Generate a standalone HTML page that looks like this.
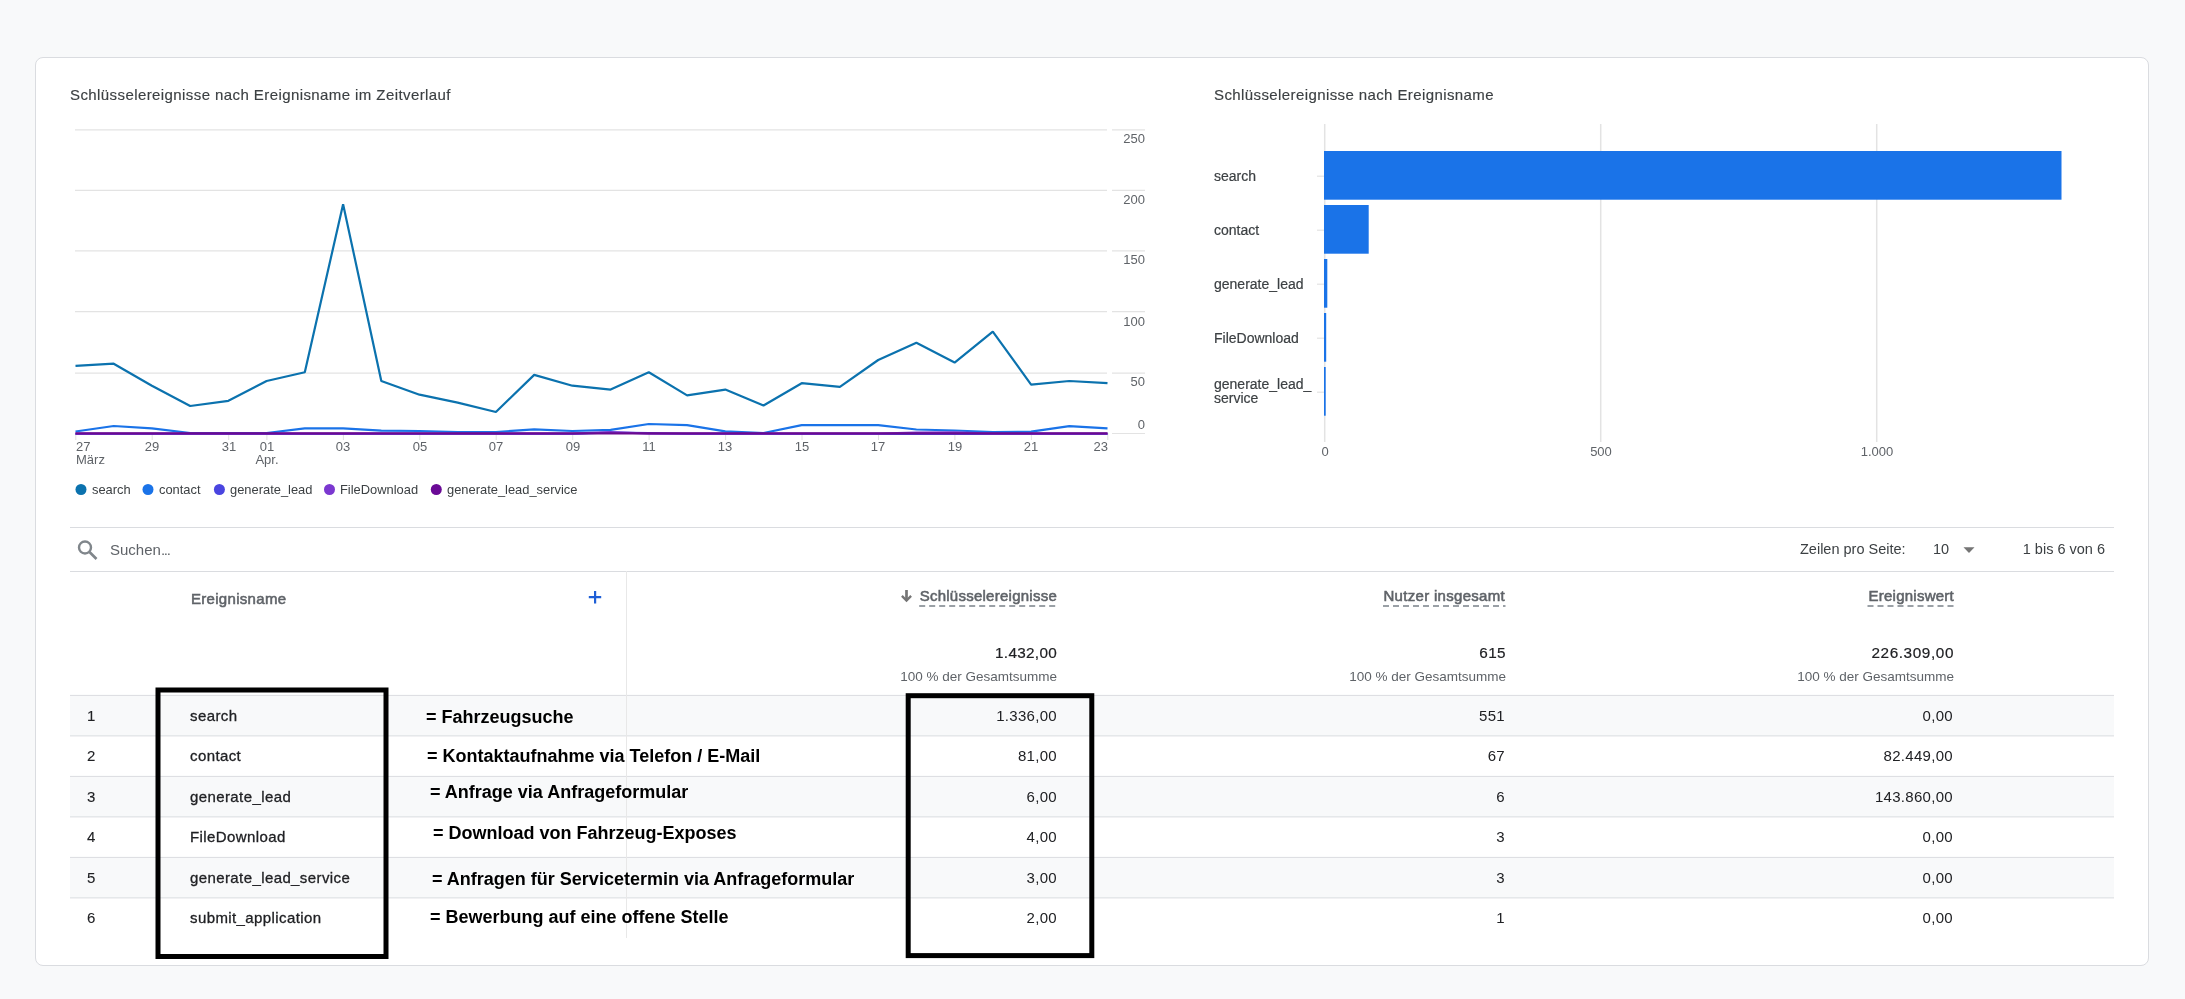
<!DOCTYPE html>
<html><head><meta charset="utf-8"><style>
html,body{margin:0;padding:0;}
body{width:2185px;height:999px;background:#f8f9fa;position:relative;overflow:hidden;font-family:"Liberation Sans", sans-serif;}
.card{position:absolute;left:35px;top:57px;width:2112px;height:907px;background:#fff;border:1px solid #dadce0;border-radius:8px;}
.t{position:absolute;white-space:nowrap;line-height:30px;height:30px;will-change:transform;}
svg{position:absolute;left:0;top:0;}
</style></head><body>
<div class="card"></div>
<svg width="2185" height="999" viewBox="0 0 2185 999">
<line x1="75" y1="129.8" x2="1107" y2="129.8" stroke="#e3e3e3" stroke-width="1.2"/>
<line x1="1112" y1="129.8" x2="1145" y2="129.8" stroke="#e3e3e3" stroke-width="1.2"/>
<line x1="75" y1="190.3" x2="1107" y2="190.3" stroke="#e3e3e3" stroke-width="1.2"/>
<line x1="1112" y1="190.3" x2="1145" y2="190.3" stroke="#e3e3e3" stroke-width="1.2"/>
<line x1="75" y1="250.9" x2="1107" y2="250.9" stroke="#e3e3e3" stroke-width="1.2"/>
<line x1="1112" y1="250.9" x2="1145" y2="250.9" stroke="#e3e3e3" stroke-width="1.2"/>
<line x1="75" y1="311.7" x2="1107" y2="311.7" stroke="#e3e3e3" stroke-width="1.2"/>
<line x1="1112" y1="311.7" x2="1145" y2="311.7" stroke="#e3e3e3" stroke-width="1.2"/>
<line x1="75" y1="373.2" x2="1107" y2="373.2" stroke="#e3e3e3" stroke-width="1.2"/>
<line x1="1112" y1="373.2" x2="1145" y2="373.2" stroke="#e3e3e3" stroke-width="1.2"/>
<line x1="75" y1="433.5" x2="1107" y2="433.5" stroke="#e3e3e3" stroke-width="1.2"/>
<line x1="1112" y1="433.5" x2="1145" y2="433.5" stroke="#e3e3e3" stroke-width="1.2"/>
<line x1="75.8" y1="433" x2="75.8" y2="440" stroke="#e0e0e0" stroke-width="1"/>
<line x1="152.2" y1="433" x2="152.2" y2="440" stroke="#e0e0e0" stroke-width="1"/>
<line x1="228.7" y1="433" x2="228.7" y2="440" stroke="#e0e0e0" stroke-width="1"/>
<line x1="266.9" y1="433" x2="266.9" y2="440" stroke="#e0e0e0" stroke-width="1"/>
<line x1="343.4" y1="433" x2="343.4" y2="440" stroke="#e0e0e0" stroke-width="1"/>
<line x1="419.8" y1="433" x2="419.8" y2="440" stroke="#e0e0e0" stroke-width="1"/>
<line x1="496.2" y1="433" x2="496.2" y2="440" stroke="#e0e0e0" stroke-width="1"/>
<line x1="572.7" y1="433" x2="572.7" y2="440" stroke="#e0e0e0" stroke-width="1"/>
<line x1="649.1" y1="433" x2="649.1" y2="440" stroke="#e0e0e0" stroke-width="1"/>
<line x1="725.6" y1="433" x2="725.6" y2="440" stroke="#e0e0e0" stroke-width="1"/>
<line x1="802.0" y1="433" x2="802.0" y2="440" stroke="#e0e0e0" stroke-width="1"/>
<line x1="878.5" y1="433" x2="878.5" y2="440" stroke="#e0e0e0" stroke-width="1"/>
<line x1="954.9" y1="433" x2="954.9" y2="440" stroke="#e0e0e0" stroke-width="1"/>
<line x1="1031.4" y1="433" x2="1031.4" y2="440" stroke="#e0e0e0" stroke-width="1"/>
<line x1="1107.8" y1="433" x2="1107.8" y2="440" stroke="#e0e0e0" stroke-width="1"/>
<polyline points="75.5,365.9 113.7,363.7 151.9,385.7 190.2,406.0 228.4,400.8 266.6,381.0 304.8,372.3 343.1,204.2 381.3,381.0 419.5,394.7 457.7,402.6 495.9,412.0 534.2,374.9 572.4,385.7 610.6,389.6 648.8,372.3 687.1,395.4 725.3,389.6 763.5,405.5 801.7,383.2 839.9,386.8 878.2,360.0 916.4,342.8 954.6,362.6 992.8,331.6 1031.1,384.6 1069.3,381.0 1107.5,383.2" fill="none" stroke="#0b72ae" stroke-width="2.2" stroke-linejoin="bevel"/>
<polyline points="75.5,431.5 113.7,426.0 151.9,428.4 190.2,433.0 228.4,433.0 266.6,433.0 304.8,428.4 343.1,428.4 381.3,430.7 419.5,431.0 457.7,432.0 495.9,432.0 534.2,429.4 572.4,431.0 610.6,429.8 648.8,424.0 687.1,425.2 725.3,431.4 763.5,433.0 801.7,425.1 839.9,425.1 878.2,425.1 916.4,429.5 954.6,430.5 992.8,432.0 1031.1,431.7 1069.3,426.2 1107.5,428.3" fill="none" stroke="#1a73e8" stroke-width="2.2" stroke-linejoin="bevel"/>
<polyline points="75.5,433.9 113.7,433.9 151.9,433.9 190.2,433.9 228.4,433.9 266.6,433.9 304.8,433.9 343.1,433.9 381.3,433.9 419.5,433.9 457.7,433.9 495.9,433.9 534.2,433.9 572.4,433.9 610.6,432.6 648.8,433.0 687.1,433.9 725.3,433.9 763.5,433.9 801.7,433.9 839.9,433.9 878.2,433.9 916.4,433.9 954.6,433.9 992.8,433.9 1031.1,433.9 1069.3,433.9 1107.5,433.9" fill="none" stroke="#4a45e0" stroke-width="2.0" stroke-linejoin="bevel"/>
<polyline points="75.5,433.6 113.7,433.6 151.9,433.6 190.2,433.6 228.4,433.6 266.6,433.6 304.8,433.6 343.1,433.6 381.3,433.6 419.5,433.6 457.7,433.6 495.9,433.6 534.2,433.6 572.4,433.6 610.6,432.0 648.8,433.6 687.1,433.6 725.3,433.6 763.5,433.6 801.7,433.6 839.9,433.6 878.2,433.6 916.4,432.5 954.6,432.3 992.8,433.6 1031.1,433.6 1069.3,433.6 1107.5,433.6" fill="none" stroke="#7b38d0" stroke-width="2.2" stroke-linejoin="bevel"/>
<polyline points="75.5,433.3 113.7,433.3 151.9,433.3 190.2,433.3 228.4,433.3 266.6,433.3 304.8,433.3 343.1,433.3 381.3,433.3 419.5,433.3 457.7,433.3 495.9,433.3 534.2,433.3 572.4,433.3 610.6,433.3 648.8,433.3 687.1,433.3 725.3,433.3 763.5,433.3 801.7,433.3 839.9,433.3 878.2,433.3 916.4,433.3 954.6,433.3 992.8,433.3 1031.1,433.3 1069.3,433.3 1107.5,433.3" fill="none" stroke="#6a0a8f" stroke-width="2.2" stroke-linejoin="bevel"/>
<line x1="1324.7" y1="124" x2="1324.7" y2="442" stroke="#e3e3e3" stroke-width="1.5"/>
<line x1="1600.7" y1="124" x2="1600.7" y2="442" stroke="#e3e3e3" stroke-width="1.5"/>
<line x1="1876.7" y1="124" x2="1876.7" y2="442" stroke="#e3e3e3" stroke-width="1.5"/>
<rect x="1324.0" y="151" width="737.5" height="48.7" fill="#1a73e8"/>
<line x1="1317" y1="176.2" x2="1324" y2="176.2" stroke="#e3e3e3" stroke-width="1.2"/>
<rect x="1324.0" y="205" width="44.7" height="48.7" fill="#1a73e8"/>
<line x1="1317" y1="230.2" x2="1324" y2="230.2" stroke="#e3e3e3" stroke-width="1.2"/>
<rect x="1324.0" y="259" width="3.3" height="48.7" fill="#1a73e8"/>
<line x1="1317" y1="284.2" x2="1324" y2="284.2" stroke="#e3e3e3" stroke-width="1.2"/>
<rect x="1324.0" y="313" width="2.2" height="48.7" fill="#1a73e8"/>
<line x1="1317" y1="338.2" x2="1324" y2="338.2" stroke="#e3e3e3" stroke-width="1.2"/>
<rect x="1324.0" y="367" width="1.7" height="48.7" fill="#1a73e8"/>
<line x1="1317" y1="392.2" x2="1324" y2="392.2" stroke="#e3e3e3" stroke-width="1.2"/>
<line x1="70" y1="527.5" x2="2114" y2="527.5" stroke="#dadce0" stroke-width="1"/>
<line x1="70" y1="571.5" x2="2114" y2="571.5" stroke="#dadce0" stroke-width="1"/>
<rect x="70" y="695.4" width="2044" height="40.5" fill="#f8f9fa"/>
<rect x="70" y="776.4" width="2044" height="40.5" fill="#f8f9fa"/>
<rect x="70" y="857.4" width="2044" height="40.5" fill="#f8f9fa"/>
<line x1="70" y1="695.4" x2="2114" y2="695.4" stroke="#dadce0" stroke-width="1"/>
<line x1="70" y1="735.9" x2="2114" y2="735.9" stroke="#dadce0" stroke-width="1"/>
<line x1="70" y1="776.4" x2="2114" y2="776.4" stroke="#dadce0" stroke-width="1"/>
<line x1="70" y1="816.9" x2="2114" y2="816.9" stroke="#dadce0" stroke-width="1"/>
<line x1="70" y1="857.4" x2="2114" y2="857.4" stroke="#dadce0" stroke-width="1"/>
<line x1="70" y1="897.9" x2="2114" y2="897.9" stroke="#dadce0" stroke-width="1"/>
<line x1="626.5" y1="571" x2="626.5" y2="938" stroke="#e8e8e8" stroke-width="1"/>
<circle cx="85" cy="547.5" r="6" fill="none" stroke="#80868b" stroke-width="2.4"/><line x1="89.5" y1="552" x2="96.5" y2="559" stroke="#80868b" stroke-width="2.6"/>
<path d="M1963.5 547.3 L1974.5 547.3 L1969 553 Z" fill="#757575"/>
<path d="M595.1 591 V603.4 M588.8 597.1 H601.2" stroke="#1f5fd6" stroke-width="2.2"/>
<path d="M906.5 590 V600.5" stroke="#757575" stroke-width="2.7" fill="none"/><path d="M901.9 595.9 L906.5 600.6 L911.1 595.9" stroke="#757575" stroke-width="2.3" fill="none" stroke-linejoin="miter"/>
<line x1="919.2" y1="606" x2="1057.3" y2="606" stroke="#9aa0a6" stroke-width="2" stroke-dasharray="6 4"/>
<line x1="1383" y1="606" x2="1505.5" y2="606" stroke="#9aa0a6" stroke-width="2" stroke-dasharray="6 4"/>
<line x1="1867.5" y1="606" x2="1953.5" y2="606" stroke="#9aa0a6" stroke-width="2" stroke-dasharray="6 4"/>
<rect x="158" y="690" width="228" height="266.5" fill="none" stroke="#000" stroke-width="5"/>
<rect x="908.2" y="695.7" width="183.6" height="259.9" fill="none" stroke="#000" stroke-width="5"/>
<circle cx="81" cy="489.5" r="5.5" fill="#0b72ae"/>
<circle cx="148" cy="489.5" r="5.5" fill="#1a73e8"/>
<circle cx="219.4" cy="489.5" r="5.5" fill="#4a45e0"/>
<circle cx="329.5" cy="489.5" r="5.5" fill="#7b38d0"/>
<circle cx="436.3" cy="489.5" r="5.5" fill="#6a0a96"/>
</svg>
<div class="t" style="left:70.00px;top:79.80px;font-size:15px;color:#3c4043;letter-spacing:0.415px;-webkit-text-stroke:0.15px #3c4043;">Schlüsselereignisse nach Ereignisname im Zeitverlauf</div>
<div class="t" style="left:1214.00px;top:79.80px;font-size:15px;color:#3c4043;letter-spacing:0.4px;-webkit-text-stroke:0.15px #3c4043;">Schlüsselereignisse nach Ereignisname</div>
<div class="t" style="left:145.00px;width:1000px;text-align:right;top:123.50px;font-size:13px;color:#5f6368;">250</div>
<div class="t" style="left:145.00px;width:1000px;text-align:right;top:184.90px;font-size:13px;color:#5f6368;">200</div>
<div class="t" style="left:145.00px;width:1000px;text-align:right;top:244.70px;font-size:13px;color:#5f6368;">150</div>
<div class="t" style="left:145.00px;width:1000px;text-align:right;top:306.70px;font-size:13px;color:#5f6368;">100</div>
<div class="t" style="left:145.00px;width:1000px;text-align:right;top:366.90px;font-size:13px;color:#5f6368;">50</div>
<div class="t" style="left:145.00px;width:1000px;text-align:right;top:409.80px;font-size:13px;color:#5f6368;">0</div>
<div class="t" style="left:76.00px;top:431.80px;font-size:13px;color:#5f6368;">27</div>
<div class="t" style="left:76.00px;top:444.80px;font-size:13px;color:#5f6368;">März</div>
<div class="t" style="left:-347.86px;width:1000px;text-align:center;top:431.80px;font-size:13px;color:#5f6368;">29</div>
<div class="t" style="left:-271.41px;width:1000px;text-align:center;top:431.80px;font-size:13px;color:#5f6368;">31</div>
<div class="t" style="left:-233.19px;width:1000px;text-align:center;top:431.80px;font-size:13px;color:#5f6368;">01</div>
<div class="t" style="left:-156.74px;width:1000px;text-align:center;top:431.80px;font-size:13px;color:#5f6368;">03</div>
<div class="t" style="left:-80.30px;width:1000px;text-align:center;top:431.80px;font-size:13px;color:#5f6368;">05</div>
<div class="t" style="left:-3.86px;width:1000px;text-align:center;top:431.80px;font-size:13px;color:#5f6368;">07</div>
<div class="t" style="left:72.59px;width:1000px;text-align:center;top:431.80px;font-size:13px;color:#5f6368;">09</div>
<div class="t" style="left:149.03px;width:1000px;text-align:center;top:431.80px;font-size:13px;color:#5f6368;">11</div>
<div class="t" style="left:225.48px;width:1000px;text-align:center;top:431.80px;font-size:13px;color:#5f6368;">13</div>
<div class="t" style="left:301.92px;width:1000px;text-align:center;top:431.80px;font-size:13px;color:#5f6368;">15</div>
<div class="t" style="left:378.37px;width:1000px;text-align:center;top:431.80px;font-size:13px;color:#5f6368;">17</div>
<div class="t" style="left:454.81px;width:1000px;text-align:center;top:431.80px;font-size:13px;color:#5f6368;">19</div>
<div class="t" style="left:531.26px;width:1000px;text-align:center;top:431.80px;font-size:13px;color:#5f6368;">21</div>
<div class="t" style="left:-233.19px;width:1000px;text-align:center;top:444.80px;font-size:13px;color:#5f6368;">Apr.</div>
<div class="t" style="left:107.50px;width:1000px;text-align:right;top:431.80px;font-size:13px;color:#5f6368;">23</div>
<div class="t" style="left:92.00px;top:474.73px;font-size:12.9px;color:#3c4043;">search</div>
<div class="t" style="left:159.00px;top:474.73px;font-size:12.9px;color:#3c4043;">contact</div>
<div class="t" style="left:230.00px;top:474.73px;font-size:12.9px;color:#3c4043;">generate_lead</div>
<div class="t" style="left:340.00px;top:474.73px;font-size:12.9px;color:#3c4043;">FileDownload</div>
<div class="t" style="left:447.00px;top:474.73px;font-size:12.9px;color:#3c4043;">generate_lead_service</div>
<div class="t" style="left:1214.00px;top:161.25px;font-size:14px;color:#3c4043;-webkit-text-stroke:0.2px #3c4043;">search</div>
<div class="t" style="left:1214.00px;top:215.25px;font-size:14px;color:#3c4043;-webkit-text-stroke:0.2px #3c4043;">contact</div>
<div class="t" style="left:1214.00px;top:269.25px;font-size:14px;color:#3c4043;-webkit-text-stroke:0.2px #3c4043;">generate_lead</div>
<div class="t" style="left:1214.00px;top:323.25px;font-size:14px;color:#3c4043;-webkit-text-stroke:0.2px #3c4043;">FileDownload</div>
<div class="t" style="left:1214.00px;top:369.05px;font-size:14px;color:#3c4043;-webkit-text-stroke:0.2px #3c4043;">generate_lead_</div>
<div class="t" style="left:1214.00px;top:383.15px;font-size:14px;color:#3c4043;-webkit-text-stroke:0.2px #3c4043;">service</div>
<div class="t" style="left:824.70px;width:1000px;text-align:center;top:437.00px;font-size:13px;color:#5f6368;">0</div>
<div class="t" style="left:1100.70px;width:1000px;text-align:center;top:437.00px;font-size:13px;color:#5f6368;">500</div>
<div class="t" style="left:1376.70px;width:1000px;text-align:center;top:437.00px;font-size:13px;color:#5f6368;">1.000</div>
<div class="t" style="left:109.80px;top:535.20px;font-size:15px;color:#5f6368;">Suchen<span style="letter-spacing:-1.25px">...</span></div>
<div class="t" style="left:1800.30px;top:534.38px;font-size:14.5px;color:#3c4043;">Zeilen pro Seite:</div>
<div class="t" style="left:1933.00px;top:534.38px;font-size:14.5px;color:#3c4043;">10</div>
<div class="t" style="left:1105.00px;width:1000px;text-align:right;top:534.38px;font-size:14.5px;color:#3c4043;">1 bis 6 von 6</div>
<div class="t" style="left:191.00px;top:584.10px;font-size:15px;color:#5f6368;letter-spacing:0.3px;-webkit-text-stroke:0.55px #5f6368;">Ereignisname</div>
<div class="t" style="left:57.25px;width:1000px;text-align:right;top:581.00px;font-size:15px;color:#5f6368;letter-spacing:0.25px;-webkit-text-stroke:0.55px #5f6368;">Schlüsselereignisse</div>
<div class="t" style="left:505.30px;width:1000px;text-align:right;top:581.00px;font-size:15px;color:#5f6368;letter-spacing:0.3px;-webkit-text-stroke:0.55px #5f6368;">Nutzer insgesamt</div>
<div class="t" style="left:953.55px;width:1000px;text-align:right;top:581.00px;font-size:15px;color:#5f6368;letter-spacing:0.25px;-webkit-text-stroke:0.55px #5f6368;">Ereigniswert</div>
<div class="t" style="left:57.30px;width:1000px;text-align:right;top:638.00px;font-size:15.3px;color:#202124;letter-spacing:0.3px;-webkit-text-stroke:0.2px #202124;">1.432,00</div>
<div class="t" style="left:57.00px;width:1000px;text-align:right;top:661.72px;font-size:13.5px;color:#5f6368;">100 % der Gesamtsumme</div>
<div class="t" style="left:505.90px;width:1000px;text-align:right;top:638.00px;font-size:15.3px;color:#202124;letter-spacing:0.4px;-webkit-text-stroke:0.2px #202124;">615</div>
<div class="t" style="left:505.50px;width:1000px;text-align:right;top:661.72px;font-size:13.5px;color:#5f6368;">100 % der Gesamtsumme</div>
<div class="t" style="left:954.10px;width:1000px;text-align:right;top:638.00px;font-size:15.3px;color:#202124;letter-spacing:0.6px;-webkit-text-stroke:0.2px #202124;">226.309,00</div>
<div class="t" style="left:953.50px;width:1000px;text-align:right;top:661.72px;font-size:13.5px;color:#5f6368;">100 % der Gesamtsumme</div>
<div class="t" style="left:87.00px;top:700.50px;font-size:15px;color:#202124;-webkit-text-stroke:0.1px #202124;">1</div>
<div class="t" style="left:190.00px;top:700.50px;font-size:15px;color:#202124;letter-spacing:0.4px;-webkit-text-stroke:0.3px #202124;">search</div>
<div class="t" style="left:57.30px;width:1000px;text-align:right;top:700.50px;font-size:15px;color:#202124;letter-spacing:0.3px;">1.336,00</div>
<div class="t" style="left:505.30px;width:1000px;text-align:right;top:700.50px;font-size:15px;color:#202124;letter-spacing:0.3px;">551</div>
<div class="t" style="left:953.00px;width:1000px;text-align:right;top:700.50px;font-size:15px;color:#202124;letter-spacing:0.3px;">0,00</div>
<div class="t" style="left:87.00px;top:741.00px;font-size:15px;color:#202124;-webkit-text-stroke:0.1px #202124;">2</div>
<div class="t" style="left:190.00px;top:741.00px;font-size:15px;color:#202124;letter-spacing:0.4px;-webkit-text-stroke:0.3px #202124;">contact</div>
<div class="t" style="left:57.30px;width:1000px;text-align:right;top:741.00px;font-size:15px;color:#202124;letter-spacing:0.3px;">81,00</div>
<div class="t" style="left:505.30px;width:1000px;text-align:right;top:741.00px;font-size:15px;color:#202124;letter-spacing:0.3px;">67</div>
<div class="t" style="left:953.00px;width:1000px;text-align:right;top:741.00px;font-size:15px;color:#202124;letter-spacing:0.3px;">82.449,00</div>
<div class="t" style="left:87.00px;top:781.50px;font-size:15px;color:#202124;-webkit-text-stroke:0.1px #202124;">3</div>
<div class="t" style="left:190.00px;top:781.50px;font-size:15px;color:#202124;letter-spacing:0.4px;-webkit-text-stroke:0.3px #202124;">generate_lead</div>
<div class="t" style="left:57.30px;width:1000px;text-align:right;top:781.50px;font-size:15px;color:#202124;letter-spacing:0.3px;">6,00</div>
<div class="t" style="left:505.30px;width:1000px;text-align:right;top:781.50px;font-size:15px;color:#202124;letter-spacing:0.3px;">6</div>
<div class="t" style="left:953.00px;width:1000px;text-align:right;top:781.50px;font-size:15px;color:#202124;letter-spacing:0.3px;">143.860,00</div>
<div class="t" style="left:87.00px;top:822.00px;font-size:15px;color:#202124;-webkit-text-stroke:0.1px #202124;">4</div>
<div class="t" style="left:190.00px;top:822.00px;font-size:15px;color:#202124;letter-spacing:0.4px;-webkit-text-stroke:0.3px #202124;">FileDownload</div>
<div class="t" style="left:57.30px;width:1000px;text-align:right;top:822.00px;font-size:15px;color:#202124;letter-spacing:0.3px;">4,00</div>
<div class="t" style="left:505.30px;width:1000px;text-align:right;top:822.00px;font-size:15px;color:#202124;letter-spacing:0.3px;">3</div>
<div class="t" style="left:953.00px;width:1000px;text-align:right;top:822.00px;font-size:15px;color:#202124;letter-spacing:0.3px;">0,00</div>
<div class="t" style="left:87.00px;top:862.50px;font-size:15px;color:#202124;-webkit-text-stroke:0.1px #202124;">5</div>
<div class="t" style="left:190.00px;top:862.50px;font-size:15px;color:#202124;letter-spacing:0.4px;-webkit-text-stroke:0.3px #202124;">generate_lead_service</div>
<div class="t" style="left:57.30px;width:1000px;text-align:right;top:862.50px;font-size:15px;color:#202124;letter-spacing:0.3px;">3,00</div>
<div class="t" style="left:505.30px;width:1000px;text-align:right;top:862.50px;font-size:15px;color:#202124;letter-spacing:0.3px;">3</div>
<div class="t" style="left:953.00px;width:1000px;text-align:right;top:862.50px;font-size:15px;color:#202124;letter-spacing:0.3px;">0,00</div>
<div class="t" style="left:87.00px;top:903.00px;font-size:15px;color:#202124;-webkit-text-stroke:0.1px #202124;">6</div>
<div class="t" style="left:190.00px;top:903.00px;font-size:15px;color:#202124;letter-spacing:0.4px;-webkit-text-stroke:0.3px #202124;">submit_application</div>
<div class="t" style="left:57.30px;width:1000px;text-align:right;top:903.00px;font-size:15px;color:#202124;letter-spacing:0.3px;">2,00</div>
<div class="t" style="left:505.30px;width:1000px;text-align:right;top:903.00px;font-size:15px;color:#202124;letter-spacing:0.3px;">1</div>
<div class="t" style="left:953.00px;width:1000px;text-align:right;top:903.00px;font-size:15px;color:#202124;letter-spacing:0.3px;">0,00</div>
<div class="t" style="left:426.00px;top:701.96px;font-size:18px;color:#000;font-weight:700;">= Fahrzeugsuche</div>
<div class="t" style="left:427.00px;top:740.96px;font-size:18px;color:#000;font-weight:700;">= Kontaktaufnahme via Telefon / E-Mail</div>
<div class="t" style="left:430.00px;top:777.06px;font-size:18px;color:#000;font-weight:700;">= Anfrage via Anfrageformular</div>
<div class="t" style="left:433.00px;top:817.56px;font-size:18px;color:#000;font-weight:700;">= Download von Fahrzeug-Exposes</div>
<div class="t" style="left:431.50px;top:863.96px;font-size:18px;color:#000;font-weight:700;">= Anfragen für Servicetermin via Anfrageformular</div>
<div class="t" style="left:430.00px;top:901.76px;font-size:18px;color:#000;font-weight:700;">= Bewerbung auf eine offene Stelle</div>
</body></html>
